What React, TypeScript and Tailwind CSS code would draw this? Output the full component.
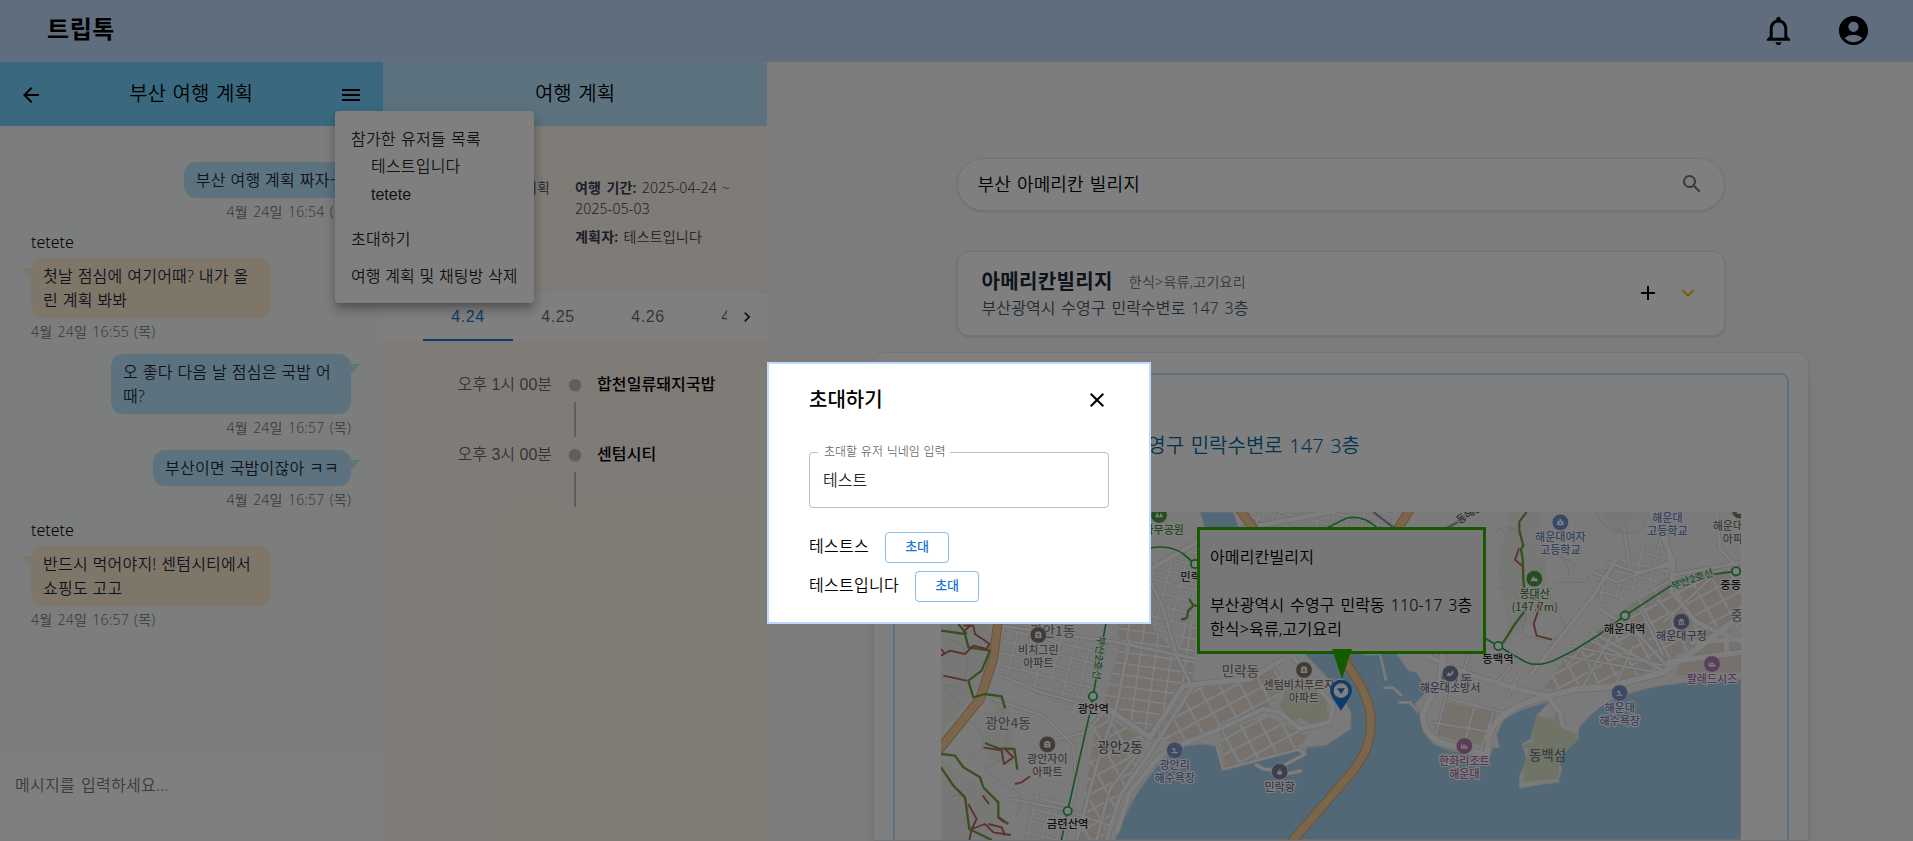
import React from "react";
import {
  MdNotificationsNone,
  MdAccountCircle,
  MdArrowBack,
  MdMenu,
  MdSearch,
  MdAdd,
  MdExpandMore,
  MdClose,
  MdKeyboardArrowRight,
} from "react-icons/md";

type Message = { mine: boolean; text: string; time: string; name?: string };

const MESSAGES: Message[] = [
  { mine: true, text: "부산 여행 계획 짜자~", time: "4월 24일 16:54 (목)" },
  { mine: false, name: "tetete", text: "첫날 점심에 여기어때? 내가 올린 계획 봐봐", time: "4월 24일 16:55 (목)" },
  { mine: true, text: "오 좋다 다음 날 점심은 국밥 어때?", time: "4월 24일 16:57 (목)" },
  { mine: true, text: "부산이면 국밥이잖아 ㅋㅋ", time: "4월 24일 16:57 (목)" },
  { mine: false, name: "tetete", text: "반드시 먹어야지! 센텀시티에서 쇼핑도 고고", time: "4월 24일 16:57 (목)" },
];

function ChatMessage({ mine, text, time, name }: Message) {
  return (
    <div className={`mb-3 flex flex-col ${mine ? "items-end" : "items-start"}`}>
      {name && <div className="h-6 text-base leading-[17px] text-black">{name}</div>}
      <div
        className={`relative max-w-60 break-all rounded-xl px-3 py-1.5 text-base leading-6 tracking-[0.22px] text-gray-800 [word-spacing:0.4px] ${
          mine ? "bg-sky-200" : "bg-[#ffedd5]"
        }`}
      >
        {text}
        <svg
          className={`absolute top-2.5 h-2.5 w-[9px] ${mine ? "-right-[9px]" : "-left-[9px]"}`}
          viewBox="0 0 9 10"
        >
          <path d={mine ? "M0 0H9L0 10Z" : "M9 0H0L9 10Z"} fill={mine ? "#bae6fd" : "#ffedd5"} />
        </svg>
      </div>
      <div className="mt-1 h-5 text-sm leading-5 tracking-[0.22px] text-[#777]">{time}</div>
    </div>
  );
}

function ChatPanel() {
  return (
    <section className="flex w-[383px] shrink-0 flex-col bg-[#f9fdfb]">
      <div className="flex h-16 items-center justify-between bg-[#75d3ff] px-[19px] pr-5 text-black">
        <MdArrowBack size={24} className="mt-0.5" />
        <h2 className="text-xl">부산 여행 계획</h2>
        <MdMenu size={24} className="mt-0.5" />
      </div>
      <div className="flex flex-1 flex-col px-[31px] pr-8 pt-9">
        {MESSAGES.map((m, i) => (
          <ChatMessage key={i} {...m} />
        ))}
      </div>
      <div className="h-[83px] bg-white px-[15px] pt-[15px] text-base leading-6 tracking-[0.3px] text-[#757575]">
        메시지를 입력하세요...
      </div>
    </section>
  );
}

const STOPS = [
  { time: "오후 1시 00분", place: "합천일류돼지국밥" },
  { time: "오후 3시 00분", place: "센텀시티" },
];

function PlanPanel() {
  return (
    <section className="flex w-96 shrink-0 flex-col bg-orange-50">
      <div className="flex h-16 items-center justify-center bg-sky-200 text-black">
        <h2 className="text-xl">여행 계획</h2>
      </div>
      <div className="bg-white">
        <div className="flex h-[167px] rounded-br-lg bg-orange-50 pt-[51px] text-sm leading-[21px] tracking-[0.2px] text-gray-700 shadow-sm">
          <div className="w-[167px] shrink-0 whitespace-nowrap text-right">여행 계획</div>
          <div className="ml-[25px] w-[170px]">
            <p>
              <b className="font-semibold">여행 기간:</b> 2025-04-24 ~ 2025-05-03
            </p>
            <p className="mt-[7px]">
              <b className="font-semibold">계획자:</b> 테스트입니다
            </p>
          </div>
        </div>
      </div>
      <div className="flex h-12 bg-white pl-10 font-['Liberation_Sans',sans-serif] text-base tracking-[0.6px] text-black/60">
        <div className="flex w-[304px] overflow-hidden">
          <div className="flex w-[90px] shrink-0 items-center justify-center border-b-2 border-[#1976d2] pt-0.5 text-[#1976d2]">
            4.24
          </div>
          <div className="flex w-[90px] shrink-0 items-center justify-center">4.25</div>
          <div className="flex w-[90px] shrink-0 items-center justify-center">4.26</div>
          <div className="flex w-[90px] shrink-0 items-center justify-center">4.27</div>
        </div>
        <div className="flex flex-1 items-center justify-center text-black/85">
          <MdKeyboardArrowRight size={20} />
        </div>
      </div>
      <div className="flex flex-col pt-8 font-['Liberation_Sans','Noto_Sans_CJK_KR',sans-serif] text-base [word-spacing:0px]">
        {STOPS.map((s) => (
          <div key={s.time} className="flex h-[70px]">
            <div className="w-[169px] text-right leading-6 text-black/60">{s.time}</div>
            <div className="flex w-[45px] flex-col items-center pl-px">
              <div className="mt-1.5 size-3 rounded-full bg-[#bdbdbd] shadow-sm" />
              <div className="mt-[11px] h-[35px] w-0.5 bg-[#bdbdbd]" />
            </div>
            <div className="font-medium leading-6 tracking-[0.1px] text-black">{s.place}</div>
          </div>
        ))}
      </div>
    </section>
  );
}

/* ---------- map ---------- */

const OUTLINED_ROADS: [string, number][] = [
  ["M663 210 L800 130 L960 85 L1200 39", 14],
  ["M663 250 L700 330 L740 470 L780 550", 10],
  ["M600 420 L560 620 L500 800 L440 1023", 10],
  ["M520 620 L660 715 L760 560 L960 540 L1060 480", 16],
  ["M530 1023 L570 890 L660 760 L790 560", 12],
  ["M500 1023 L540 870 L640 740", 9],
  ["M560 1000 L600 880 L690 770 L760 735 L870 690 L1000 630 L1050 640 L1110 690 L1200 670 L1210 620 L1090 475", 14],
  ["M210 380 L560 430 L800 480", 9],
  ["M215 530 L330 580 L480 620", 8],
  ["M190 600 L340 650 L430 740 L440 850 L400 1023", 8],
  ["M240 900 L400 930 L540 980", 8],
  ["M380 720 L470 700 L520 640", 8],
  ["M860 740 L880 810 L1110 750", 8],
  ["M975 795 L1000 810 L1040 815 M1070 825 L1115 815 M1060 800 L1125 765 L1105 750", 9],
  ["M1540 460 L1530 540 L1480 640 Q1475 700 1530 730 L1670 770 L1680 700 Q1700 650 1790 610 L1860 590 L1940 570 L2030 565 L2200 520 L2300 450 L2433 350", 18],
  ["M1490 470 L1600 520 L1760 570 L1850 590 L1890 640 L1900 685", 15],
  ["M1560 600 L1720 640 M1550 580 L1520 700 M1640 600 L1600 740 M1690 640 L1650 760 M1505 670 L1690 700", 7],
  ["M1600 520 L1640 400 M1700 550 L1760 480 M1730 600 L1770 520", 8],
  ["M1800 530 L1990 290 L2060 180", 12],
  ["M1985 400 L2200 515 M2010 330 L2120 400 L2210 500", 10],
  ["M2160 39 L2190 90 L2230 190 L2225 280 L2300 370 L2433 430", 14],
  ["M2200 39 L2210 130 L2220 210 M2220 230 L2433 190 M2360 39 L2370 150 L2433 220", 10],
  ["M2030 190 L2120 220 L2220 200 M1990 220 L2060 250 L2220 190 M2080 80 L2100 200", 8],
  ["M2210 490 L2433 460 M2390 470 L2390 400 M2280 430 L2433 420", 16],
  ["M1900 470 L2180 520 M1920 440 L2200 500 M1950 410 L2080 470", 7],
  ["M2050 400 L1960 560 M2110 440 L2060 550 M2000 390 L1910 500", 7],
  ["M2130 330 L2200 470 M2180 300 L2290 420 M2350 230 L2200 370", 8],
];

const BLOCK_AREAS: [string, string][] = [
  ["M560 372 L800 372 L790 540 L660 710 L520 620 L570 430Z", "url(#blocksA)"],
  ["M663 190 L800 110 L800 330 L740 470 L663 380Z", "url(#blocksC)"],
  ["M500 640 L650 720 L590 850 L540 1023 L440 1023 L470 860Z", "url(#blocksB)"],
  ["M665 715 L780 570 L1040 510 L1070 560 L1000 640 L740 730Z", "url(#blocksB)"],
  ["M870 700 L1010 650 L1130 710 L1110 745 L885 805Z", "url(#blocksB)"],
  ["M215 390 L540 430 L500 590 L430 640 L210 530Z", "url(#blocksC)"],
  ["M300 870 L420 900 L400 1023 L280 1023Z", "url(#blocksC)"],
  ["M950 39 L1400 39 L1380 85 L980 85Z", "url(#blocksC)"],
  ["M1920 460 L2120 300 L2220 230 L2433 200 L2433 380 L2200 510 L1960 570 L1840 570Z", "url(#blocksB)"],
  ["M1550 610 L1700 640 L1660 740 L1520 710Z", "#efe2d8"],
  ["M1990 220 L2210 100 L2220 230 L2000 330Z", "url(#blocksC)"],
  ["M2300 440 L2433 430 L2433 520 L2230 530Z", "#efe2d8"],
];

const CONTOURS = [
  "M60 420 Q120 440 110 510 T60 560 T90 620",
  "M180 600 Q240 640 230 720 T180 800 T240 870",
  "M60 660 Q120 650 150 700 T120 780",
  "M60 900 Q90 870 110 910 T80 980",
  "M250 870 Q290 900 260 950",
  "M1680 120 Q1720 60 1760 100 T1740 200",
  "M1690 280 Q1720 240 1760 290 T1780 380 T1850 420 T1880 330 T1930 250 T1890 170",
  "M1720 100 L1760 90 M1850 160 Q1920 170 1915 230",
  "M2000 39 Q2010 90 2080 100 T2140 60",
];

const GREEN_TRAILS = [
  "M33 395 L105 405 L115 445 L180 455 L155 515 L115 545 L130 595 L165 585 L215 592 L225 628",
  "M33 765 L75 770 L100 805 L150 835 L160 865 L205 910 L205 955 L235 975",
  "M33 805 L70 860 L105 895 L118 990 L185 1023",
  "M165 732 L205 748 L253 750 L262 812",
  "M85 375 L110 405",
  "M778 300 L790 320 L775 335 L770 358 L753 362 M790 320 L805 320",
  "M1790 39 L1768 68 L1768 95 L1780 140 L1773 150 L1778 180 L1780 240 L1784 290 L1820 300",
  "M1705 440 L1720 430 L1755 375 L1785 335",
];
const RED_TRAILS = [
  "M100 380 L130 380 L135 405 L165 425 L178 435 L170 450 L130 440 L105 465 L60 455 L33 470",
  "M33 450 L45 465 M40 530 L110 545 M100 400 L122 378",
  "M160 745 L215 755 L222 795 L250 775 L225 750",
  "M255 855 L275 850 L300 832 M158 890 L177 915",
  "M115 915 L140 960 L125 990 L118 1023 M125 990 L165 975 L190 1000 L243 1008 M175 975 L215 985 L225 1010 M205 955 L222 970",
  "M1767 148 L1755 182 L1775 200",
  "M1825 300 L1825 335 L1811 375 L1820 410 L1866 422",
];

type LabelProps = { x: number; y: number; lines: string[]; color: string; size?: number };
function MapLabel({ x, y, lines, color, size = 33 }: LabelProps) {
  return (
    <text
      x={x}
      textAnchor="middle"
      fontSize={size}
      fontWeight={500}
      fill={color}
      stroke="#fff"
      strokeWidth={7}
      strokeLinejoin="round"
      paintOrder="stroke"
    >
      {lines.map((l, i) => (
        <tspan key={i} x={x} y={y + i * 39}>
          {l}
        </tspan>
      ))}
    </text>
  );
}

const DISTRICTS: LabelProps[] = [
  { x: 368, y: 412, lines: ["광안1동"], color: "#8a8a8a", size: 41 },
  { x: 234, y: 687, lines: ["광안4동"], color: "#8a8a8a", size: 41 },
  { x: 570, y: 760, lines: ["광안2동"], color: "#707070", size: 41 },
  { x: 931, y: 532, lines: ["민락동"], color: "#8a8a8a", size: 41 },
  { x: 1578, y: 558, lines: ["우1동"], color: "#8a8a8a", size: 41 },
  { x: 2440, y: 362, lines: ["중동"], color: "#8a8a8a", size: 41 },
];

const LABELS: LabelProps[] = [
  { x: 701, y: 104, lines: ["나무공원"], color: "#4c8a3c" },
  { x: 798, y: 246, lines: ["민락역"], color: "#333", size: 34 },
  { x: 325, y: 464, lines: ["비치그린", "아파트"], color: "#80766e" },
  { x: 490, y: 643, lines: ["광안역"], color: "#222", size: 34 },
  { x: 352, y: 792, lines: ["광안자이", "아파트"], color: "#80766e" },
  { x: 413, y: 988, lines: ["금련산역"], color: "#222", size: 34 },
  { x: 734, y: 811, lines: ["광안리", "해수욕장"], color: "#6f80bd" },
  { x: 1122, y: 570, lines: ["센텀비치푸르지오", "아파트"], color: "#80766e" },
  { x: 1049, y: 875, lines: ["민락항"], color: "#6b7590" },
  { x: 1891, y: 126, lines: ["해운대여자", "고등학교"], color: "#6c85c2" },
  { x: 2212, y: 69, lines: ["해운대", "고등학교"], color: "#6c85c2" },
  { x: 2424, y: 92, lines: ["해운대경동", "아파트"], color: "#80766e" },
  { x: 1814, y: 297, lines: ["봉대산", "(147.7m)"], color: "#4c8a3c" },
  { x: 1704, y: 492, lines: ["동백역"], color: "#222", size: 34 },
  { x: 2084, y: 401, lines: ["해운대역"], color: "#222", size: 34 },
  { x: 2418, y: 269, lines: ["중동역"], color: "#222", size: 34 },
  { x: 2254, y: 423, lines: ["해운대구청"], color: "#6b7590" },
  { x: 2346, y: 551, lines: ["팔레드시즈"], color: "#a86fa8" },
  { x: 1560, y: 580, lines: ["해운대소방서"], color: "#6b7590" },
  { x: 2069, y: 640, lines: ["해운대", "해수욕장"], color: "#6f80bd" },
  { x: 1603, y: 798, lines: ["한화리조트", "해운대"], color: "#a86fa8" },
];

const HOUSE = "M-11 11V-6L-5-12H5L11-6V11ZM-5-4V-1H5V-4ZM-5 2V5H5V2Z";
const PALM = "M-11-5Q-2-13 4-2L0 0L3 6H11V10H-11V6H-2L-4-2Z";
const BED = "M-12-8H-9V2H12V9H-12ZM-6-4H6V0H-6Z";

const POIS: { x: number; y: number; color: string; glyph: string }[] = [
  { x: 687, y: 48, color: "#4f9a45", glyph: "M-13 8L-6-10L1 8ZM1 8L7-8L14 8Z" },
  { x: 325, y: 408, color: "#85786e", glyph: HOUSE },
  { x: 352, y: 736, color: "#85786e", glyph: HOUSE },
  { x: 1122, y: 513, color: "#85786e", glyph: HOUSE },
  { x: 734, y: 754, color: "#7c92cf", glyph: PALM },
  { x: 1049, y: 818, color: "#77809d", glyph: "M-10-1H10L7 10H-7ZM-6-3Q0-14 6-3Z" },
  { x: 1891, y: 70, color: "#7391d0", glyph: "M-11-3L-3-6V-12H3V-6L11-3V10H-11ZM-3-1V5H3V-1Z" },
  { x: 1813, y: 239, color: "#4f9a45", glyph: "M-14 9L-4-9L2 1L6-4L14 9Z" },
  { x: 2254, y: 368, color: "#77809d", glyph: "M-11-3L0-11L11-3V-1H-11ZM-9 1H-5V8H-9ZM-2 1H2V8H-2ZM5 1H9V8H5ZM-11 8H11V11H-11Z" },
  { x: 2346, y: 495, color: "#b47ab2", glyph: BED },
  { x: 1561, y: 524, color: "#77809d", glyph: "M-13 8L-8-4L2 0L6-10L12-8L8 2L0 8Z" },
  { x: 2069, y: 582, color: "#7c92cf", glyph: PALM },
  { x: 1603, y: 741, color: "#b47ab2", glyph: BED },
  { x: 2430, y: 35, color: "#85786e", glyph: HOUSE },
];

const STATIONS: [number, number][] = [
  [489, 592],
  [413, 936],
  [795, 195],
  [1705, 441],
  [2085, 350],
  [2418, 217],
];

function MapDrawing() {
  return (
    <svg
      className="block h-full w-full font-['Noto_Sans_CJK_KR',sans-serif] [word-spacing:0px]"
      viewBox="33 39 2400 984"
    >
      <defs>
        <pattern id="blocksA" width="46" height="34" patternUnits="userSpaceOnUse" patternTransform="rotate(8)">
          <rect width="46" height="34" fill="#fff" />
          <rect x="4" y="4" width="38" height="26" fill="#eee4dc" stroke="#dcdcdc" strokeWidth="2" />
        </pattern>
        <pattern id="blocksB" width="56" height="42" patternUnits="userSpaceOnUse" patternTransform="rotate(-28)">
          <rect width="56" height="42" fill="#fff" />
          <rect x="5" y="5" width="46" height="32" fill="#efe2d8" stroke="#dcdcdc" strokeWidth="2" />
        </pattern>
        <pattern id="blocksC" width="44" height="36" patternUnits="userSpaceOnUse" patternTransform="rotate(14)">
          <rect width="44" height="36" fill="#fcfcfc" />
          <rect x="4" y="4" width="36" height="28" fill="#f3f2f1" stroke="#dedede" strokeWidth="2" />
        </pattern>
      </defs>
      <rect x="33" y="39" width="2400" height="984" fill="#f5f5f4" />
      <path d="M33 372 L180 372 L180 500 L120 600 L33 700Z M33 780 L200 900 L240 1023 L33 1023Z M160 640 L240 610 L250 800 L170 780Z" fill="#eef1eb" />
      <path d="M1740 39 L1830 39 L1850 200 L1840 340 L1740 420 L1700 200Z M2010 39 L2150 39 L2060 110Z" fill="#eff1ed" />
      {BLOCK_AREAS.map(([d, fill], i) => (
        <path key={i} d={d} fill={fill} />
      ))}
      <path
        d="M555 1023 Q600 900 660 830 Q700 770 760 742 L815 735 L862 742 L868 775 L883 815 L970 792 L1000 775 L1105 748 L1125 765 L1130 745 L1190 738 L1262 690 L1263 640 L1215 560 L1125 465 L1010 300 L940 130 L910 39 L810 39 L835 120 L1000 440 L1380 440 L1400 465 L1435 515 L1460 520 L1492 575 L1455 615 L1475 655 L1480 700 L1510 735 L1560 755 L1680 772 L1690 745 L1708 745 L1700 705 L1722 660 L1780 630 L1860 606 L1820 650 L1802 720 L1776 735 L1790 780 L1770 830 L1768 868 L1840 855 L1885 850 L1895 810 L1885 780 L1945 720 L1945 690 Q1980 640 2040 605 Q2110 575 2190 560 L2270 550 L2433 540 L2433 1023Z"
        fill="#a5d0ef"
        stroke="#e2e6e8"
        strokeWidth="3"
      />
      <path d="M1820 650 L1870 660 L1880 630 L1900 690 L1945 705 L1940 725 L1890 775 L1885 840 L1780 848 L1782 800 L1795 750 L1776 740 L1805 730Z" fill="#dfe8cc" />
      <path d="M1065 575 L1140 540 L1190 610 L1195 660 L1150 680 L1110 655 L1085 670 L1050 620Z" fill="#dfe8cc" />
      <path d="M1300 465 L1350 465 L1368 545 M1360 566 L1390 566 L1415 590 M1405 610 L1440 610 L1465 640" fill="none" stroke="#f4f4f4" strokeWidth="8" />
      {CONTOURS.map((d, i) => (
        <path key={i} d={d} fill="none" stroke="#dedfdc" strokeWidth="3" />
      ))}
      {OUTLINED_ROADS.map(([d, w], i) => (
        <path key={`c${i}`} d={d} fill="none" stroke="#d6d6d6" strokeWidth={w + 4} strokeLinejoin="round" />
      ))}
      {OUTLINED_ROADS.map(([d, w], i) => (
        <path key={`r${i}`} d={d} fill="none" stroke="#fdfdfd" strokeWidth={w} strokeLinejoin="round" />
      ))}
      {[
        "M205 360 L190 480 L150 600 L25 755",
        "M1075 1040 L1270 815 L1302 765 Q1325 720 1322 650 Q1312 575 1245 490 L1380 130 L1440 30",
        "M925 25 L975 95",
      ].map((d, i) => (
        <g key={i} fill="none" strokeLinejoin="round">
          <path d={d} stroke="#cfa572" strokeWidth="29" />
          <path d={d} stroke="#f8cc97" strokeWidth="23" />
        </g>
      ))}
      <g fill="none" strokeWidth="7" strokeLinejoin="round">
        {GREEN_TRAILS.map((d, i) => (
          <path key={i} d={d} stroke="#739f45" />
        ))}
        {RED_TRAILS.map((d, i) => (
          <path key={i} d={d} stroke="#b8605c" strokeWidth="5.5" />
        ))}
      </g>
      <path d="M1330 39 L1390 85 M1545 90 L1640 39" fill="none" stroke="#8d9ab5" strokeWidth="7" />
      <g fill="none" stroke="#2fa84f" strokeWidth="5">
        <path d="M530 360 L489 592 L480 640 L413 936 L393 1030" />
        <path d="M655 148 Q720 135 760 165 L795 195" />
        <path d="M1195 85 L1250 57 Q1300 48 1340 85" />
        <path d="M1660 415 L1705 441 L1785 488 Q1820 505 1870 485 L1930 455 L2010 405 L2085 350 L2215 265 Q2270 230 2340 227 L2418 217" />
      </g>
      {STATIONS.map(([x, y], i) => (
        <circle key={i} cx={x} cy={y} r="12.5" fill="#fff" stroke="#2fa84f" strokeWidth="5.5" />
      ))}
      {DISTRICTS.map((l, i) => (
        <MapLabel key={i} {...l} />
      ))}
      {LABELS.map((l, i) => (
        <MapLabel key={i} {...l} />
      ))}
      {POIS.map((p, i) => (
        <g key={i} transform={`translate(${p.x} ${p.y})`}>
          <circle r="25" fill={p.color} stroke="#fff" strokeWidth="2" />
          <path d={p.glyph} fill="#fff" fillRule="evenodd" transform="scale(0.85)" />
        </g>
      ))}
      <text x="1853" y="782" textAnchor="middle" fontSize="40" fontWeight="500" fill="#777f88">
        동백섬
      </text>
      <g fill="#3a9a55" fontSize="31" fontWeight="500" stroke="#fff" strokeWidth="5" paintOrder="stroke">
        <text transform="translate(504 410) rotate(97)">부산2호선</text>
        <text transform="translate(2228 272) rotate(-19)">부산2호선</text>
      </g>
      <text transform="translate(1588 76) rotate(-33)" fontSize="31" fontWeight="500" fill="#555" stroke="#fff" strokeWidth="5" paintOrder="stroke">
        동해선
      </text>
      <g>
        <path d="M1233 635 L1206 594 A33 33 0 1 1 1260 594Z" fill="#1f7ad6" />
        <circle cx="1233" cy="575" r="22" fill="#fff" />
        <path d="M1221 568H1245L1233 585Z" fill="#1f7ad6" />
      </g>
    </svg>
  );
}

function InfoWindow() {
  return (
    <div className="absolute left-64 top-[15px] h-[127px] w-[289px] border-[3px] border-[#2db400] bg-[#eee] px-[10px] pt-[15px] text-base leading-6 tracking-[0.15px] text-black">
      <p className="whitespace-nowrap">아메리칸빌리지</p>
      <p className="mt-6 whitespace-nowrap">부산광역시 수영구 민락동 110-17 3층</p>
      <p className="whitespace-nowrap">한식&gt;육류,고기요리</p>
      <svg className="absolute left-[132px] top-[119px] h-[30px] w-5" viewBox="0 0 20 30">
        <path d="M0 0H20L10 30Z" fill="#2db400" />
      </svg>
    </div>
  );
}

function MainPanel() {
  return (
    <main className="flex flex-1 flex-col items-center bg-[#faf9f6] pt-24">
      <div className="mr-[-1px] flex h-[54px] w-[768px] items-center justify-between rounded-full border border-gray-200 bg-white pl-5 pr-5 text-lg text-black shadow">
        <span className="tracking-[0.1px]">부산 아메리칸 빌리지</span>
        <MdSearch size={24} className="text-[#78716c]" />
      </div>
      <div className="mr-[-1px] mt-10 flex h-[87px] w-[768px] items-center rounded-xl border border-gray-200 bg-white px-6 shadow">
        <div className="flex-1 pt-px">
          <div className="flex items-center gap-4">
            <span className="text-xl font-bold leading-7 tracking-[0.35px] text-gray-800">아메리칸빌리지</span>
            <span className="text-sm tracking-[0.3px] text-gray-500">한식&gt;육류,고기요리</span>
          </div>
          <div className="text-base leading-6 tracking-[0.1px] text-gray-600">부산광역시 수영구 민락수변로 147 3층</div>
        </div>
        <MdAdd size={24} className="text-black" />
        <MdExpandMore size={24} className="ml-4 text-[#ffb300]" />
      </div>
      <div className="mr-[-2px] mt-4 w-[936px] flex-1 rounded-t-xl border border-gray-200 bg-white px-[19px] pt-5 shadow-lg">
        <div className="h-full rounded-t-lg border-2 border-b-0 border-sky-200 px-[46px]">
          <div className="flex h-[137px] items-center justify-end pr-[381px] text-xl text-[#0369a1]">
            <span className="mt-1">부산광역시 수영구 민락수변로 147 3층</span>
          </div>
          <div className="relative h-[328px] w-[800px] overflow-hidden">
            <MapDrawing />
            <InfoWindow />
          </div>
        </div>
      </div>
    </main>
  );
}

function RoomMenu() {
  return (
    <div className="absolute left-[335px] top-[111px] h-48 w-[199px] rounded bg-white px-4 pt-[17px] font-['Liberation_Sans','Noto_Sans_CJK_KR',sans-serif] text-base leading-6 tracking-[0.2px] text-black/87 shadow-[0_5px_5px_-3px_rgba(0,0,0,0.2),0_8px_10px_1px_rgba(0,0,0,0.14),0_3px_14px_2px_rgba(0,0,0,0.12)] [word-spacing:0.6px]">
      <div>참가한 유저들 목록</div>
      <div className="mt-[3px] pl-5">테스트입니다</div>
      <div className="mt-1 pl-5 tracking-normal">tetete</div>
      <div className="mt-[21px]">초대하기</div>
      <div className="mt-[13px] whitespace-nowrap tracking-[0.12px] [word-spacing:0px]">여행 계획 및 채팅방 삭제</div>
    </div>
  );
}

function InviteDialog() {
  return (
    <div className="absolute left-[767px] top-[362px] h-[262px] w-96 border-2 border-blue-200 bg-white px-10 pt-5 text-black">
      <div className="flex h-8 items-center justify-between">
        <h3 className="text-xl font-medium">초대하기</h3>
        <MdClose size={24} />
      </div>
      <div className="relative mt-9 flex h-14 w-[300px] items-center rounded border border-black/25 px-[13px] text-base text-black/87">
        <span className="absolute -top-3 left-2 bg-white pl-[6px] pr-[4px] text-xs leading-[22px] text-black/60 [word-spacing:0.6px]">
          초대할 유저 닉네임 입력
        </span>
        테스트
      </div>
      <div className="mt-6 flex flex-col gap-2">
        {["테스트스", "테스트입니다"].map((n) => (
          <div key={n} className="flex h-[31px] items-center gap-4 text-base leading-6">
            <span className="-mt-1 tracking-[0.3px]">{n}</span>
            <span className="flex h-[31px] w-16 items-center justify-center rounded border border-[#1976d2]/50 pb-[3px] text-[13px] font-medium text-[#1976d2]">
              초대
            </span>
          </div>
        ))}
      </div>
    </div>
  );
}

export default function App() {
  return (
    <div className="relative flex h-[841px] w-full flex-col overflow-hidden bg-white font-['Noto_Sans','Noto_Sans_CJK_KR',sans-serif] font-[350] [word-spacing:1.4px]">
      <header className="flex h-[62px] shrink-0 items-center justify-between bg-blue-200 pl-[47px] pr-[42px] text-black">
        <h1 className="mb-1 text-2xl font-bold tracking-[0.6px]">트립톡</h1>
        <div className="flex items-center gap-10 pb-0.5">
          <MdNotificationsNone size={35} />
          <MdAccountCircle size={35} />
        </div>
      </header>
      <div className="flex min-h-0 flex-1">
        <ChatPanel />
        <PlanPanel />
        <MainPanel />
      </div>
      <RoomMenu />
      <div className="absolute inset-0 bg-black/50" />
      <InviteDialog />
    </div>
  );
}
